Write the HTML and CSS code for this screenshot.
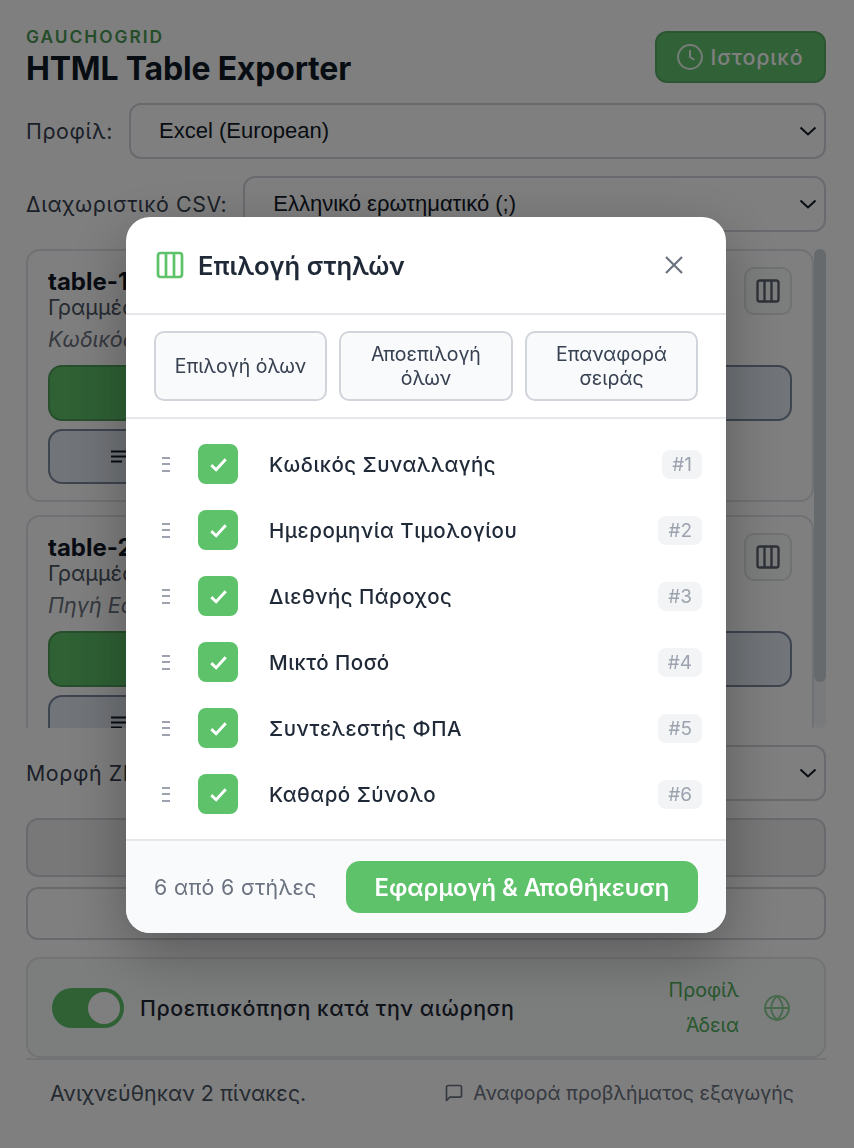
FILE: index.html
```html
<!DOCTYPE html>
<html lang="el">
<head>
<meta charset="utf-8">
<title>GauchoGrid</title>
<link rel="stylesheet" href="styles.css">
</head>
<body>
<svg class="defs" width="0" height="0" aria-hidden="true">
  <symbol id="cols" viewBox="0 0 24 24"><rect x="3" y="3" width="18" height="18" rx="2" fill="none" stroke="currentColor" stroke-width="2"/><path d="M9 3v18M15 3v18" fill="none" stroke="currentColor" stroke-width="2"/></symbol>
  <symbol id="chev" viewBox="0 0 18 10"><path d="M1.500 1.500 9 8.500l7.500-7" fill="none" stroke="currentColor" stroke-width="2"/></symbol>
  <symbol id="lines" viewBox="0 0 16 14"><path d="M0 1.500h16M0 6.500h16M0 11.500h11" fill="none" stroke="currentColor" stroke-width="2"/></symbol>
  <symbol id="check" viewBox="0 0 16 16"><path d="M2.500 8.500 6.200 12l7.300-8" fill="none" stroke="currentColor" stroke-width="2.200"/></symbol>
</svg>
<main class="app">
  <header class="top">
    <div class="brand">
      <div class="eyebrow">GAUCHOGRID</div>
      <h1 class="title">HTML Table Exporter</h1>
    </div>
    <button class="history">
      <svg class="history-icon" viewBox="0 0 24 24"><circle cx="12" cy="12" r="11" fill="none" stroke="currentColor" stroke-width="1.800"/><path d="M12 5.500V12l4 2.500" fill="none" stroke="currentColor" stroke-width="1.800"/></svg>
      <span>Ιστορικό</span>
    </button>
  </header>

  <div class="field">
    <span class="field-label">Προφίλ:</span>
    <div class="select"><span>Excel (European)</span><svg class="chev"><use href="#chev"/></svg></div>
  </div>
  <div class="field">
    <span class="field-label">Διαχωριστικό CSV:</span>
    <div class="select"><span>Ελληνικό ερωτηματικό (;)</span><svg class="chev"><use href="#chev"/></svg></div>
  </div>

  <section class="tables">
    <div class="table-list">
      <article class="card">
        <div class="card-head">
          <div>
            <h2 class="card-title">table-1</h2>
            <p class="card-meta">Γραμμές: 24</p>
            <p class="card-cols">Κωδικός Συναλλαγής</p>
          </div>
          <span class="icon-btn"><svg class="icon-btn-svg"><use href="#cols"/></svg></span>
        </div>
        <div class="card-actions">
          <span class="btn-green"></span>
          <span class="btn-outline"></span>
        </div>
        <div class="btn-outline btn-sub"><svg class="lines"><use href="#lines"/></svg></div>
      </article>
      <article class="card">
        <div class="card-head">
          <div>
            <h2 class="card-title">table-2</h2>
            <p class="card-meta">Γραμμές: 12</p>
            <p class="card-cols">Πηγή Εσόδων</p>
          </div>
          <span class="icon-btn"><svg class="icon-btn-svg"><use href="#cols"/></svg></span>
        </div>
        <div class="card-actions">
          <span class="btn-green"></span>
          <span class="btn-outline"></span>
        </div>
        <div class="btn-outline btn-sub"><svg class="lines"><use href="#lines"/></svg></div>
      </article>
    </div>
    <div class="rail"><div class="thumb"></div></div>
  </section>

  <div class="field zip">
    <span class="field-label">Μορφή ZIP:</span>
    <div class="select"><span>Ένα αρχείο</span><svg class="chev"><use href="#chev"/></svg></div>
  </div>

  <div class="wide-btn wide-a"></div>
  <div class="wide-btn wide-b"></div>

  <section class="prefs">
    <span class="toggle"><span class="knob"></span></span>
    <span class="pref-label">Προεπισκόπηση κατά την αιώρηση</span>
    <div class="links"><span>Προφίλ</span><span>Άδεια</span></div>
    <svg class="globe" viewBox="0 0 24 24"><circle cx="12" cy="12" r="11" fill="none" stroke="currentColor" stroke-width="1.800"/><path d="M1 12h22M12 1c-7 7-7 15 0 22M12 1c7 7 7 15 0 22" fill="none" stroke="currentColor" stroke-width="1.800"/></svg>
  </section>

  <footer class="foot">
    <span class="detected">Ανιχνεύθηκαν 2 πίνακες.</span>
    <span class="report">
      <svg class="report-icon" viewBox="0 0 24 24"><path d="M21 15a2 2 0 0 1-2 2H7l-4 4V5a2 2 0 0 1 2-2h14a2 2 0 0 1 2 2z" fill="none" stroke="currentColor" stroke-width="2" stroke-linejoin="round"/></svg>
      <span>Αναφορά προβλήματος εξαγωγής</span>
    </span>
  </footer>
</main>

<div class="overlay">
  <div class="modal">
    <div class="modal-head">
      <svg class="modal-icon"><use href="#cols"/></svg>
      <h2 class="modal-title">Επιλογή στηλών</h2>
      <svg class="close" viewBox="0 0 20 20"><path d="M2 2l16 16M18 2 2 18" fill="none" stroke="currentColor" stroke-width="2.200"/></svg>
    </div>
    <div class="modal-tools">
      <button class="tool">Επιλογή όλων</button>
      <button class="tool">Αποεπιλογή όλων</button>
      <button class="tool">Επαναφορά σειράς</button>
    </div>
    <ul class="col-list">
      <li class="col-row"><span class="drag"></span><span class="check"><svg class="check-svg"><use href="#check"/></svg></span><span class="col-name">Κωδικός Συναλλαγής</span><span class="badge">#1</span></li>
      <li class="col-row"><span class="drag"></span><span class="check"><svg class="check-svg"><use href="#check"/></svg></span><span class="col-name">Ημερομηνία Τιμολογίου</span><span class="badge">#2</span></li>
      <li class="col-row"><span class="drag"></span><span class="check"><svg class="check-svg"><use href="#check"/></svg></span><span class="col-name">Διεθνής Πάροχος</span><span class="badge">#3</span></li>
      <li class="col-row"><span class="drag"></span><span class="check"><svg class="check-svg"><use href="#check"/></svg></span><span class="col-name">Μικτό Ποσό</span><span class="badge">#4</span></li>
      <li class="col-row"><span class="drag"></span><span class="check"><svg class="check-svg"><use href="#check"/></svg></span><span class="col-name">Συντελεστής ΦΠΑ</span><span class="badge">#5</span></li>
      <li class="col-row"><span class="drag"></span><span class="check"><svg class="check-svg"><use href="#check"/></svg></span><span class="col-name">Καθαρό Σύνολο</span><span class="badge">#6</span></li>
    </ul>
    <div class="modal-foot">
      <span class="count">6 από 6 στήλες</span>
      <button class="apply">Εφαρμογή &amp; Αποθήκευση</button>
    </div>
  </div>
</div>
</body>
</html>
```

FILE: styles.css
```css
* { box-sizing: border-box; }
html, body { margin: 0; padding: 0; height: 1148px; overflow: hidden; background: #fff; }
body { font-family: Inter, "Noto Sans", sans-serif; color: #111827; }
.defs { position: absolute; }
h1, h2, p, ul { margin: 0; padding: 0; }
button { font-family: inherit; }

.app { padding: 31px 28px 0 26px; width: 854px; }
.top { display: flex; justify-content: space-between; align-items: flex-start; margin-bottom: 20px; height: 52px; }
.eyebrow { font-size: 17.330px; line-height: 12px; font-weight: 600; letter-spacing: 2px; color: #4a9a55; }
.title { font-size: 32px; line-height: 38px; font-weight: 700; color: #111827; margin-top: 7px; letter-spacing: -.2px; }
.history { display: flex; align-items: center; justify-content: center; gap: 7px; width: 171px; height: 52px; border: 2px solid #58ad63; border-radius: 12px; background: #62c46e; color: #fff; font-size: 21.330px; font-weight: 500; letter-spacing: .85px; padding: 0; }
.history-icon { width: 26px; height: 26px; opacity: .9; }

.field { display: flex; align-items: center; gap: 16px; margin-bottom: 17px; }
.field-label { font-size: 21.330px; letter-spacing: .6px; color: #374151; white-space: nowrap; }
.select { flex: 1; height: 56px; border: 2px solid #d1d5db; border-radius: 12px; display: flex; align-items: center; justify-content: space-between; padding: 0 7px 0 28px; font-family: "Liberation Sans", Arial, sans-serif; font-size: 22px; color: #111827; background: #fff; }
.chev { width: 18px; height: 10px; color: #111827; }

.tables { display: flex; height: 479px; margin-bottom: 17px; }
.table-list { flex: 1; overflow: hidden; min-width: 0; }
.rail { width: 12px; background: #f3f4f6; border-radius: 6px; }
.thumb { height: 433px; border-radius: 6px; background: #cdd5db; }
.card { border: 2px solid #e0e3e8; border-radius: 14px; padding: 20px; margin-bottom: 13px; height: 253px; background: #fff; }
.card-head { display: flex; justify-content: space-between; height: 94px; }
.card-title { font-size: 24px; line-height: 26px; font-weight: 700; color: #111827; margin-top: -2px; }
.card-meta { font-size: 21.600px; line-height: 24px; color: #4b5563; margin-top: 0; }
.card-cols { font-size: 21.600px; line-height: 24px; font-style: italic; color: #6b7280; margin-top: 8px; }
.icon-btn { display: flex; align-items: center; justify-content: center; width: 48px; height: 48px; border: 2px solid #dfe2e6; border-radius: 10px; margin-top: -4px; background: #f9fafb; }
.icon-btn-svg { width: 28px; height: 28px; color: #5b6270; }
.card-actions { display: grid; grid-template-columns: 1fr 1fr; gap: 8px; height: 56px; }
.btn-green { background: #5ec26a; border: 2px solid #4f9f59; border-radius: 14px; }
.btn-outline { border: 2px solid #7c8a9f; border-radius: 14px; background: #e2e8f0; }
.btn-sub { margin-top: 8px; width: 368px; height: 55px; display: flex; align-items: center; padding-left: 61px; }
.lines { width: 16px; height: 14px; color: #111827; }

.zip { margin-bottom: 17px; }
.wide-btn { border: 2px solid #d1d5db; border-radius: 12px; }
.wide-a { height: 59px; margin-bottom: 10px; background: #eef0ee; }
.wide-b { height: 53px; margin-bottom: 17px; background: #fff; }

.prefs { display: flex; align-items: center; height: 101px; border: 2px solid #e5e7eb; border-radius: 14px; padding: 0 34px 0 24px; background: #f9fafb; }
.toggle { display: block; width: 72px; height: 40px; border-radius: 20px; background: #5ec26a; padding: 4px 4px 4px 36px; flex: none; }
.knob { display: block; width: 32px; height: 32px; border-radius: 50%; background: #fff; }
.pref-label { font-size: 21.330px; font-weight: 500; letter-spacing: .57px; color: #1f2937; margin-left: 16px; flex: 1; white-space: nowrap; }
.links { display: flex; flex-direction: column; align-items: flex-end; gap: 13px; font-size: 19.600px; line-height: 22px; color: #4fb05b; }
.globe { width: 26px; height: 26px; margin-left: 25px; color: #5ec26a; opacity: .7; }

.foot { display: flex; justify-content: space-between; align-items: center; border-top: 2px solid #e5e7eb; padding: 21px 32px 0 24px; }
.detected { font-size: 21.330px; line-height: 24px; letter-spacing: .05px; color: #4b5563; }
.report { display: flex; align-items: center; gap: 9px; font-size: 19.500px; letter-spacing: .07px; color: #6b7280; }
.report-icon { width: 20px; height: 20px; }

.overlay { position: fixed; inset: 0; background: rgba(0, 0, 0, .5); display: flex; align-items: flex-start; justify-content: center; padding: 217px 2px 0 0; }
.modal { width: 600px; height: 716px; background: #fff; border-radius: 24px; overflow: hidden; box-shadow: 0 20px 60px rgba(0, 0, 0, .3); display: flex; flex-direction: column; }
.modal-head { display: flex; align-items: center; height: 98px; flex: none; padding: 0 42px 0 28px; border-bottom: 2px solid #e5e7eb; }
.modal-icon { width: 32px; height: 32px; color: #5ec26a; flex: none; margin-right: 12px; }
.modal-title { flex: 1; font-size: 25.600px; font-weight: 600; color: #1f2937; }
.close { width: 20px; height: 20px; color: #6b7280; }
.modal-tools { display: grid; grid-template-columns: 173px 174px 173px; gap: 12px; padding: 16px 28px; height: 104px; flex: none; border-bottom: 2px solid #e5e7eb; }
.tool { border: 2px solid #d1d5db; border-radius: 10px; background: #f9fafb; color: #374151; font-size: 19.500px; line-height: 24px; padding: 0 14px; }
.col-list { list-style: none; padding: 12px 24px 10px 36px; height: 420px; flex: none; }
.col-row { display: flex; align-items: center; height: 66px; }
.drag { display: block; width: 8px; height: 15px; border-top: 2px solid #9ca3af; border-bottom: 2px solid #9ca3af; position: relative; margin-right: 28px; flex: none; }
.drag::after { content: ""; position: absolute; left: 0; right: 0; top: 4.500px; height: 2px; background: #9ca3af; }
.check { display: flex; align-items: center; justify-content: center; width: 40px; height: 40px; border-radius: 8px; background: #5ec26a; color: #fff; flex: none; }
.check-svg { width: 21px; height: 21px; }
.col-name { flex: 1; margin-left: 31px; font-size: 20.500px; font-weight: 500; letter-spacing: .5px; color: #1f2937; }
.badge { height: 29px; padding: 0 10px; border-radius: 8px; background: #f3f4f6; color: #9ca3af; font-size: 19px; line-height: 29px; }
.modal-foot { flex: 1; display: flex; align-items: center; justify-content: space-between; padding: 0 28px; border-top: 2px solid #e5e7eb; background: #f9fafb; }
.count { font-size: 21.330px; letter-spacing: .35px; color: #6b7280; }
.apply { width: 352px; height: 52px; border: 0; border-radius: 14px; background: #5ec26a; color: #fff; font-size: 23.800px; font-weight: 600; padding: 0; }
```
